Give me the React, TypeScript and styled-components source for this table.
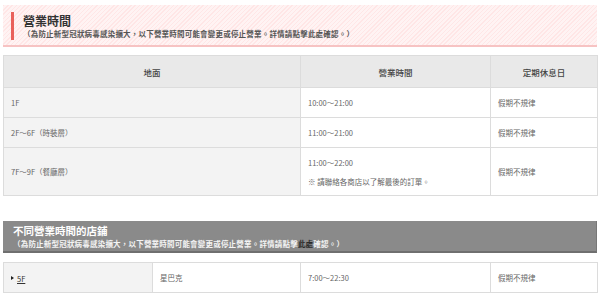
import React from "react";
import styled, { createGlobalStyle } from "styled-components";

const Global = createGlobalStyle`
  html, body { margin: 0; padding: 0; background: #fff; }
  body { font-family: "Noto Sans CJK TC", "Noto Sans", sans-serif; color: #555; }
`;

const Page = styled.div`
  width: 600px;
  padding: 5px 3px 0;
  box-sizing: border-box;
`;

const Notice = styled.div`
  background-color: #fff3f3;
  background-image: repeating-linear-gradient(
    -45deg,
    #ffe6e6 0px,
    #ffe6e6 1px,
    transparent 1px,
    transparent 3px
  );
  border-bottom: 2px solid #f7c3c3;
  padding: 7px 8px 5px 8px;
`;

const NoticeInner = styled.div`
  border-left: 3px solid #e9615b;
  padding-left: 9px;
  height: 28px;
  display: flex;
  flex-direction: column;
  justify-content: center;
`;

const Title = styled.h2`
  margin: 0;
  font-size: 12px;
  line-height: 15px;
  font-weight: 700;
  color: #333;
`;

const Sub = styled.p<{ $light?: boolean }>`
  margin: 0;
  font-size: 7.5px;
  line-height: 12px;
  letter-spacing: 0.2px;
  font-weight: 700;
  color: ${(p) => (p.$light ? "#f4f4f4" : "#555")};
  white-space: nowrap;
`;

const Link = styled.a<{ $dark?: boolean }>`
  color: ${(p) => (p.$dark ? "#2a2a2a" : "inherit")};
  text-decoration: none;
`;

const Table = styled.table<{ $mt: number }>`
  width: 594px;
  margin-top: ${(p) => p.$mt}px;
  border-collapse: collapse;
  table-layout: fixed;
`;

const Th = styled.th`
  height: 31px;
  padding: 0;
  background: #e9e9e9;
  border: 1px solid #dcdcdc;
  font-size: 8.5px;
  font-weight: 500;
  color: #444;
  text-align: center;
`;

const Td = styled.td<{ $h: number; $shade?: boolean }>`
  height: ${(p) => p.$h}px;
  padding: 0 0 0 7px;
  background: ${(p) => (p.$shade ? "#f3f3f3" : "#fff")};
  border: 1px solid #dcdcdc;
  font-size: 7.5px;
  color: #666;
  text-align: left;
  vertical-align: middle;
  white-space: nowrap;
`;

const Note = styled.div`
  margin-top: 8px;
`;

const Section = styled.div`
  margin-top: 25px;
  background: #8a8a8a;
  border-bottom: 2px solid #6f6f6f;
  border-right: 1px solid #777;
  padding: 3px 9px 2px 10px;
  height: 25px;
  display: flex;
  flex-direction: column;
  justify-content: center;
`;

const SectionTitle = styled.h3`
  margin: 0;
  font-size: 10.5px;
  line-height: 14px;
  font-weight: 700;
  color: #fff;
`;

const Floor = styled.span`
  display: inline-flex;
  align-items: center;
  gap: 3px;
  color: #333;
`;

const Arrow = styled.span`
  width: 0;
  height: 0;
  border-top: 2.5px solid transparent;
  border-bottom: 2.5px solid transparent;
  border-left: 3px solid #222;
`;

const FloorLink = styled.a`
  color: #333;
  text-decoration: underline;
`;

const rows = [
  { floor: "1F", time: "10:00～21:00", off: "假期不規律", h: 29 },
  { floor: "2F～6F（時裝層）", time: "11:00～21:00", off: "假期不規律", h: 29 },
];

export default function App() {
  return (
    <>
      <Global />
      <Page>
        <Notice>
          <NoticeInner>
            <Title>營業時間</Title>
            <Sub>
              （為防止新型冠狀病毒感染擴大，以下營業時間可能會變更或停止營業。詳情請點擊<Link>此處</Link>確認。）
            </Sub>
          </NoticeInner>
        </Notice>

        <Table $mt={8}>
          <colgroup>
            <col style={{ width: 297 }} />
            <col style={{ width: 190 }} />
            <col style={{ width: 107 }} />
          </colgroup>
          <thead>
            <tr>
              <Th>地面</Th>
              <Th>營業時間</Th>
              <Th>定期休息日</Th>
            </tr>
          </thead>
          <tbody>
            {rows.map((r) => (
              <tr key={r.floor}>
                <Td $h={r.h} $shade>{r.floor}</Td>
                <Td $h={r.h}>{r.time}</Td>
                <Td $h={r.h}>{r.off}</Td>
              </tr>
            ))}
            <tr>
              <Td $h={47} $shade>7F～9F（餐廳層）</Td>
              <Td $h={47}>
                <div>11:00～22:00</div>
                <Note>※ 請聯絡各商店以了解最後的訂單。</Note>
              </Td>
              <Td $h={47}>假期不規律</Td>
            </tr>
          </tbody>
        </Table>

        <Section>
          <SectionTitle>不同營業時間的店鋪</SectionTitle>
          <Sub $light>
            （為防止新型冠狀病毒感染擴大，以下營業時間可能會變更或停止營業。詳情請點擊<Link $dark>此處</Link>確認。）
          </Sub>
        </Section>

        <Table $mt={9}>
          <colgroup>
            <col style={{ width: 149 }} />
            <col style={{ width: 148 }} />
            <col style={{ width: 190 }} />
            <col style={{ width: 107 }} />
          </colgroup>
          <tbody>
            <tr>
              <Td $h={29} $shade>
                <Floor>
                  <Arrow />
                  <FloorLink>5F</FloorLink>
                </Floor>
              </Td>
              <Td $h={29}>星巴克</Td>
              <Td $h={29}>7:00～22:30</Td>
              <Td $h={29}>假期不規律</Td>
            </tr>
          </tbody>
        </Table>
      </Page>
    </>
  );
}
